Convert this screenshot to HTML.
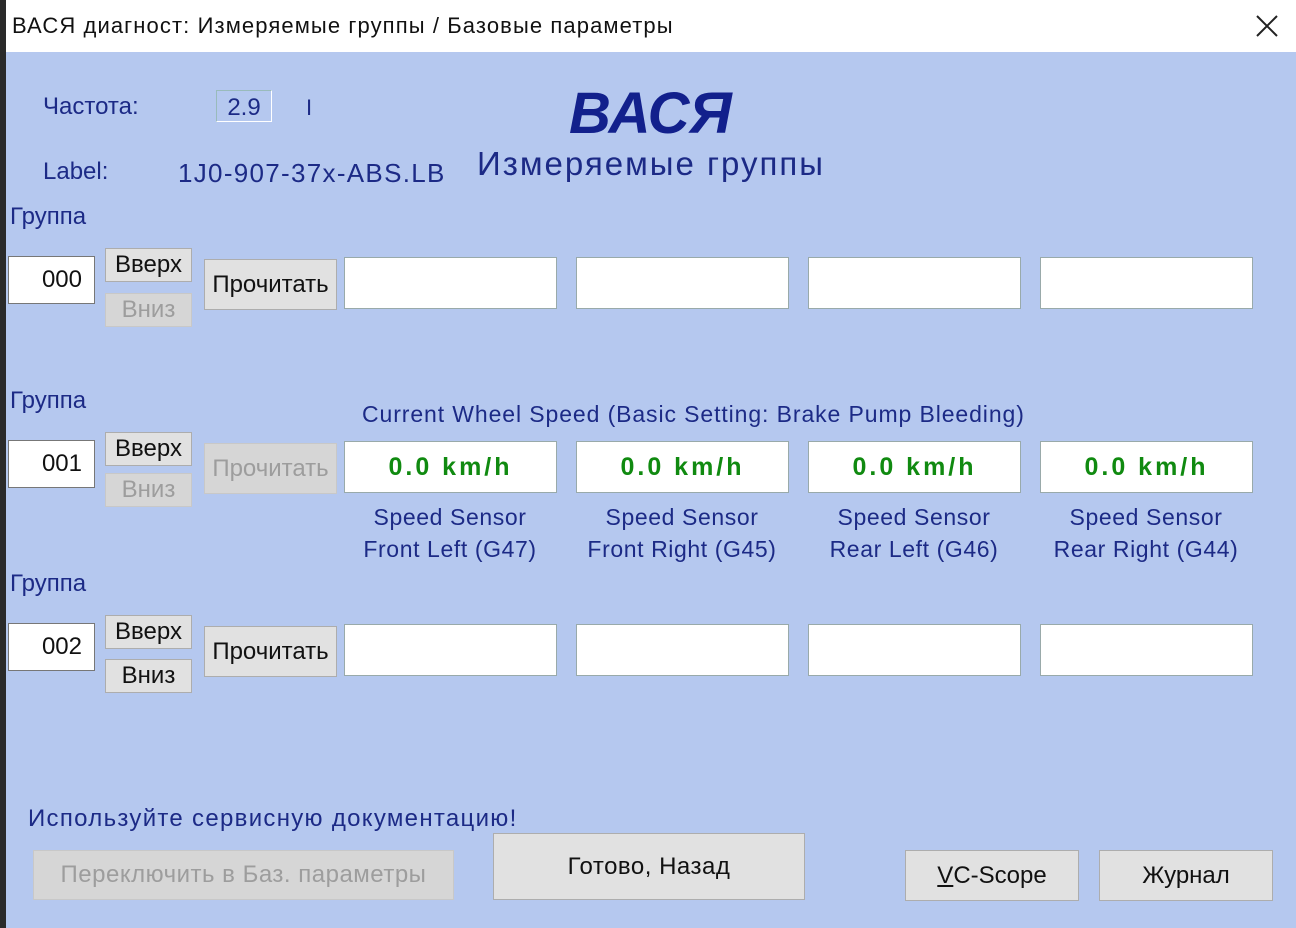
<!DOCTYPE html><html><head><meta charset="utf-8"><style>
*{margin:0;padding:0;box-sizing:border-box}
body{width:1296px;height:928px;position:relative;overflow:hidden;background:#b5c8ef;font-family:"Liberation Sans","DejaVu Sans",sans-serif}
.a{position:absolute;white-space:nowrap}
.n{color:#1c2a86}
.btn{position:absolute;background:#e1e1e1;border:1px solid #adadad;color:#111;text-align:center;font-size:24px;display:flex;align-items:center;justify-content:center}
.dis{color:#9d9d9d;background:#d6d6d6;border-color:#c8c8c8}
.box{position:absolute;background:#fff;border:1px solid #9aa;}
.inp{position:absolute;background:#fff;border:1px solid #777;font-size:24px;text-align:right;padding-right:12px;display:flex;align-items:center;justify-content:flex-end;color:#111}
.v{color:#108a10;font-weight:bold;font-size:25px;letter-spacing:3px;display:flex;align-items:center;justify-content:center}
.lbl{position:absolute;color:#1c2a86;font-size:23px;letter-spacing:0.6px;text-align:center;line-height:32px;width:212px}
</style></head><body>
<div class="a" style="left:0;top:0;width:6px;height:928px;background:#2a2a2a"></div>
<div class="a" style="left:6px;top:0;width:1290px;height:52px;background:#fff"></div>
<div class="a" style="left:12px;top:13px;font-size:22px;color:#111;letter-spacing:1.1px">ВАСЯ диагност: Измеряемые группы / Базовые параметры</div>
<svg class="a" style="left:1256px;top:15px" width="22" height="22" viewBox="0 0 22 22"><path d="M1 1L21 21M21 1L1 21" stroke="#222" stroke-width="2"/></svg>

<div class="a n" style="left:43px;top:93px;font-size:24px">Частота:</div>
<div class="a n" style="left:216px;top:90px;width:56px;height:32px;border:1px solid #9bb;border-bottom-color:#fff;border-right-color:#fff;font-size:24px;text-align:center;line-height:34px">2.9</div>
<div class="a n" style="left:306px;top:95px;font-size:22px">I</div>
<div class="a n" style="left:43px;top:158px;font-size:24px">Label:</div>
<div class="a n" style="left:178px;top:158px;font-size:26px;letter-spacing:1.3px">1J0-907-37x-ABS.LB</div>
<div class="a" style="left:569px;top:80px;font-size:58px;font-weight:bold;font-style:italic;color:#12208c">ВАСЯ</div>
<div class="a n" style="left:477px;top:145px;font-size:33px;letter-spacing:2px">Измеряемые группы</div>

<div class="a n" style="left:10px;top:203px;font-size:24px">Группа</div>
<div class="inp" style="left:8px;top:256px;width:87px;height:48px">000</div>
<div class="btn" style="left:105px;top:248px;width:87px;height:34px">Вверх</div>
<div class="btn dis" style="left:105px;top:293px;width:87px;height:34px">Вниз</div>
<div class="btn" style="left:204px;top:259px;width:133px;height:51px">Прочитать</div>
<div class="box" style="left:344px;top:257px;width:213px;height:52px"></div>
<div class="box" style="left:576px;top:257px;width:213px;height:52px"></div>
<div class="box" style="left:808px;top:257px;width:213px;height:52px"></div>
<div class="box" style="left:1040px;top:257px;width:213px;height:52px"></div>

<div class="a n" style="left:10px;top:387px;font-size:24px">Группа</div>
<div class="a n" style="left:362px;top:401px;font-size:23px;letter-spacing:0.9px">Current Wheel Speed (Basic Setting: Brake Pump Bleeding)</div>
<div class="inp" style="left:8px;top:440px;width:87px;height:48px">001</div>
<div class="btn" style="left:105px;top:432px;width:87px;height:34px">Вверх</div>
<div class="btn dis" style="left:105px;top:473px;width:87px;height:34px">Вниз</div>
<div class="btn dis" style="left:204px;top:443px;width:133px;height:51px">Прочитать</div>
<div class="box v" style="left:344px;top:441px;width:213px;height:52px">0.0 km/h</div>
<div class="box v" style="left:576px;top:441px;width:213px;height:52px">0.0 km/h</div>
<div class="box v" style="left:808px;top:441px;width:213px;height:52px">0.0 km/h</div>
<div class="box v" style="left:1040px;top:441px;width:213px;height:52px">0.0 km/h</div>
<div class="lbl" style="left:344px;top:501px">Speed Sensor<br>Front Left (G47)</div>
<div class="lbl" style="left:576px;top:501px">Speed Sensor<br>Front Right (G45)</div>
<div class="lbl" style="left:808px;top:501px">Speed Sensor<br>Rear Left (G46)</div>
<div class="lbl" style="left:1040px;top:501px">Speed Sensor<br>Rear Right (G44)</div>

<div class="a n" style="left:10px;top:570px;font-size:24px">Группа</div>
<div class="inp" style="left:8px;top:623px;width:87px;height:48px">002</div>
<div class="btn" style="left:105px;top:615px;width:87px;height:34px">Вверх</div>
<div class="btn" style="left:105px;top:659px;width:87px;height:34px">Вниз</div>
<div class="btn" style="left:204px;top:626px;width:133px;height:51px">Прочитать</div>
<div class="box" style="left:344px;top:624px;width:213px;height:52px"></div>
<div class="box" style="left:576px;top:624px;width:213px;height:52px"></div>
<div class="box" style="left:808px;top:624px;width:213px;height:52px"></div>
<div class="box" style="left:1040px;top:624px;width:213px;height:52px"></div>

<div class="a n" style="left:28px;top:805px;font-size:24px;letter-spacing:1.3px">Используйте сервисную документацию!</div>
<div class="btn dis" style="left:33px;top:850px;width:421px;height:50px;letter-spacing:0.5px">Переключить в Баз. параметры</div>
<div class="btn" style="left:493px;top:833px;width:312px;height:67px;letter-spacing:0.5px">Готово, Назад</div>
<div class="btn" style="left:905px;top:850px;width:174px;height:51px"><span><u>V</u>C-Scope</span></div>
<div class="btn" style="left:1099px;top:850px;width:174px;height:51px">Журнал</div>
</body></html>
